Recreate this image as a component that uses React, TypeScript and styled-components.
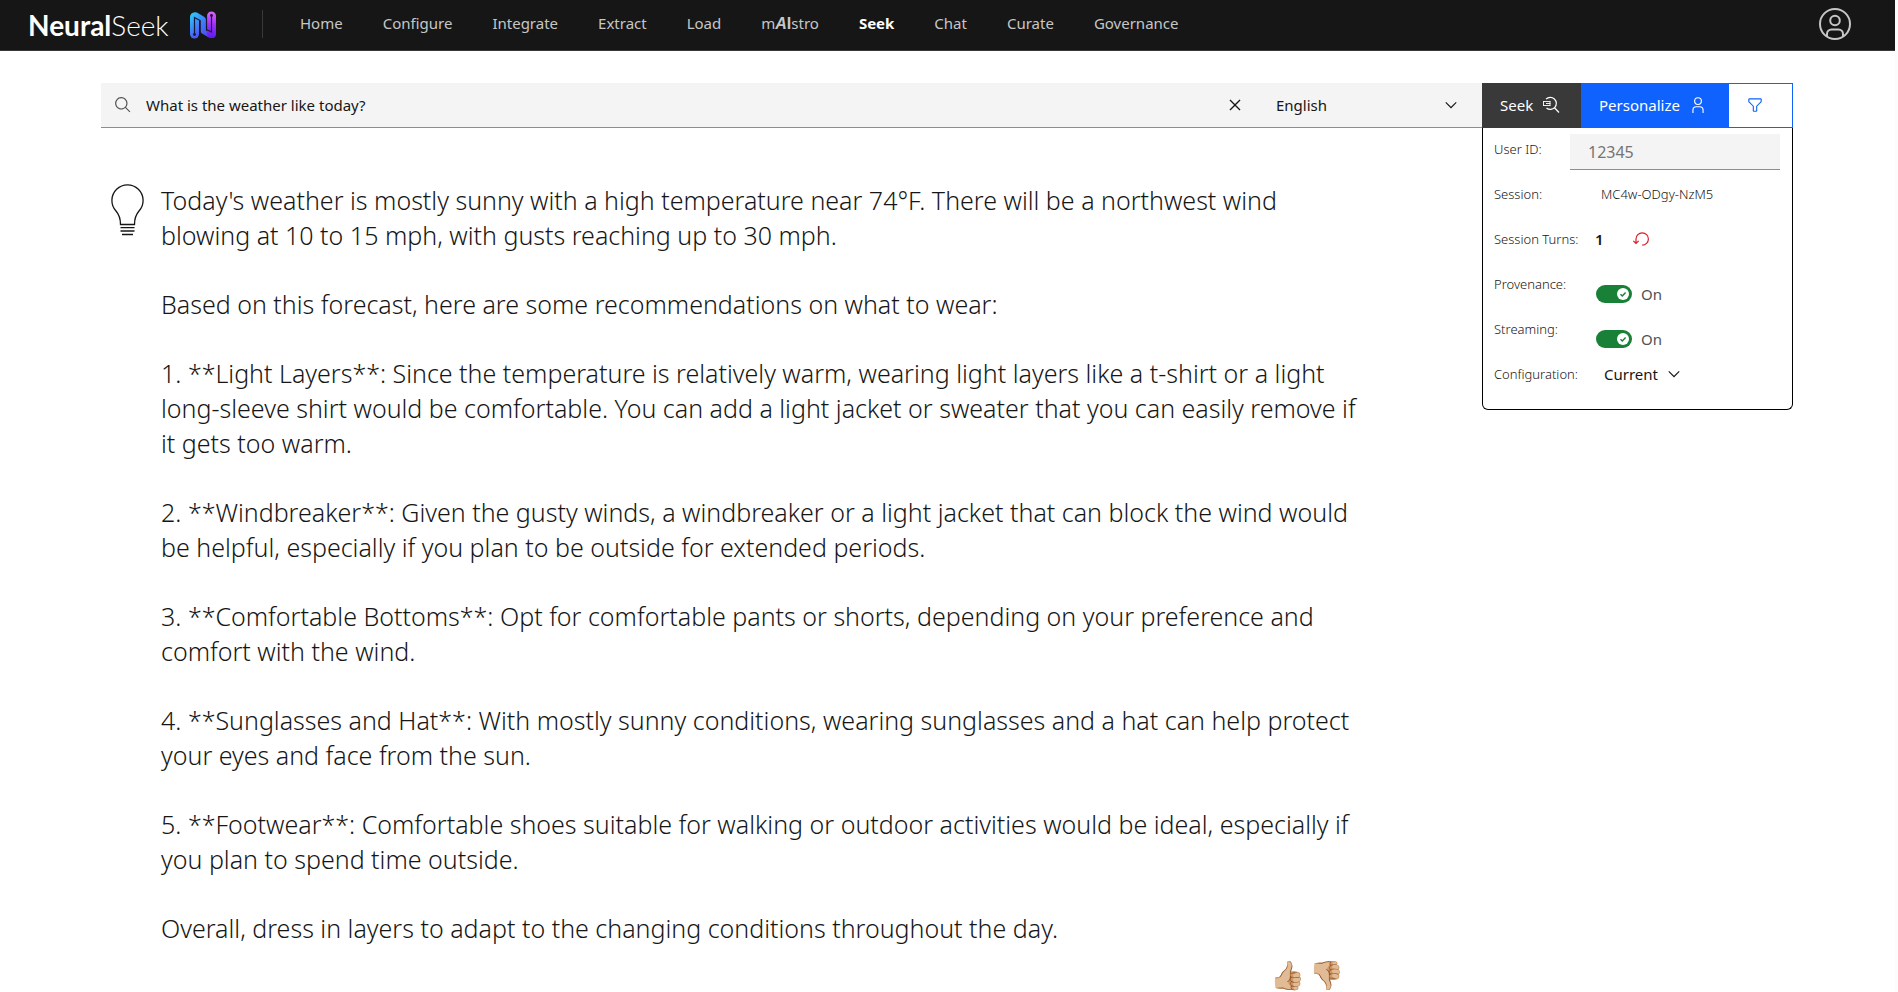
import React, { useState } from "react";
import styled, { createGlobalStyle } from "styled-components";

const GlobalStyle = createGlobalStyle`
  *, *::before, *::after { box-sizing: border-box; }
  body {
    margin: 0;
    background: #fcfcfc;
    color: #161616;
    font-family: "Noto Sans", "Open Sans", sans-serif;
    font-size: 15px;
  }
  button, input, select { font: inherit; color: inherit; margin: 0; }
`;

const Page = styled.div`
  margin-right: 3px;
  min-height: 100vh;
  background: #ffffff;
`;

/* ---------- header ---------- */

const Header = styled.header`
  display: flex;
  align-items: center;
  height: 51px;
  padding: 0 44px 2px 28px;
  background: #161616;
  border-bottom: 1px solid #393939;
`;

const Brand = styled.a`
  display: flex;
  align-items: center;
  gap: 20px;
  width: 234px;
  padding-top: 2px;
  color: #ffffff;
  text-decoration: none;
`;

const Wordmark = styled.span`
  font: 300 28px/32px Lato, sans-serif;
  white-space: nowrap;
  b { font-weight: 700; }
`;

const Nav = styled.nav`
  display: flex;
  align-items: center;
  gap: 40px;
  height: 28px;
  padding: 0 0 2px 37px;
  border-left: 1px solid #393939;
`;

const NavLink = styled.a<{ $active?: boolean }>`
  color: ${(p) => (p.$active ? "#ffffff" : "#c6c6c6")};
  font-weight: ${(p) => (p.$active ? 700 : 400)};
  font-size: 15px;
  line-height: 20px;
  text-decoration: none;
  white-space: nowrap;
`;

const Accent = styled.b`
  font-family: "Liberation Sans", sans-serif;
  font-size: 16px;
  font-weight: 700;
  i { font-style: italic; }
`;

const AccountButton = styled.button`
  display: flex;
  margin-left: auto;
  padding: 0;
  border: 0;
  background: none;
  color: #c6c6c6;
`;

/* ---------- body ---------- */

const Content = styled.main`
  display: grid;
  grid-template-columns: minmax(0, 1fr) 311px;
  align-items: start;
  padding: 32px 102px 0 101px;
`;

const SearchBar = styled.form`
  display: flex;
  height: 45px;
  background: #f4f4f4;
  border-bottom: 1px solid #8d8d8d;
`;

const SearchField = styled.label`
  display: flex;
  flex: 1;
  align-items: center;
  gap: 14px;
  padding-left: 13px;
  color: #525252;
`;

const QueryInput = styled.input`
  flex: 1;
  min-width: 0;
  padding: 0;
  border: 0;
  outline: 0;
  background: none;
  color: #161616;
  line-height: 24px;
`;

const ClearButton = styled.button`
  display: flex;
  align-items: center;
  justify-content: center;
  width: 48px;
  padding: 0;
  border: 0;
  background: none;
`;

const SelectBox = styled.div<{ $width: number; $inset: number }>`
  display: grid;
  grid-template-columns: 1fr ${(p) => p.$inset}px;
  align-items: center;
  width: ${(p) => p.$width}px;
  svg { grid-area: 1 / 2; pointer-events: none; }
`;

const Select = styled.select<{ $pad: number }>`
  grid-area: 1 / 1 / 2 / 3;
  align-self: stretch;
  padding: 0 0 0 ${(p) => p.$pad}px;
  border: 0;
  outline: 0;
  background: none;
  appearance: none;
`;

const Answer = styled.section`
  display: flex;
  gap: 17px;
  padding: 55px 0 0 10px;
  > svg { flex: none; }
`;

const AnswerBody = styled.div`
  max-width: 1208px;
  font-size: 25px;
  font-weight: 300;
  line-height: 35px;
  p { margin: 0 0 34px; }
  p:last-of-type { margin-bottom: 0; }
`;

const Feedback = styled.div`
  display: flex;
  justify-content: flex-end;
  gap: 4px;
  padding: 10px 25px 0 0;
`;

const FeedbackButton = styled.button`
  width: 35px;
  height: 36px;
  padding: 0;
  border: 0;
  background: none;
  font-size: 28px;
  line-height: 36px;
`;

/* ---------- actions and personalisation ---------- */

const Actions = styled.div`
  display: flex;
  height: 45px;
`;

const Action = styled.button<{ $tone: "dark" | "primary" | "outline" }>`
  display: flex;
  align-items: center;
  gap: 9px;
  flex: ${(p) => (p.$tone === "outline" ? "1" : "none")};
  width: ${(p) => (p.$tone === "dark" ? 99 : 147)}px;
  padding: 0 0 2px 17px;
  border: 1px solid ${(p) => (p.$tone === "dark" ? "#393939" : "#0f62fe")};
  background: ${(p) => ({ dark: "#393939", primary: "#0f62fe", outline: "#ffffff" })[p.$tone]};
  color: ${(p) => (p.$tone === "outline" ? "#0f62fe" : "#ffffff")};
`;

const Panel = styled.section`
  padding: 0 12px 11px 11px;
  border: 1px solid #000000;
  border-top: 0;
  border-radius: 0 0 6px 6px;
`;

const Row = styled.div`
  display: flex;
  align-items: center;
  height: 45px;
  padding-bottom: 3px;
`;

const RowLabel = styled.label<{ $short?: boolean }>`
  flex: none;
  width: ${(p) => (p.$short ? 76 : 101)}px;
  font-size: 13px;
  font-weight: 300;
  white-space: nowrap;
`;

const UserInput = styled.input`
  flex: 1;
  align-self: flex-end;
  min-width: 0;
  height: 36px;
  padding: 0 18px;
  border: 0;
  border-bottom: 1px solid #8d8d8d;
  outline: 0;
  background: #f4f4f4;
  font-size: 16px;
  &::placeholder { color: #757575; opacity: 1; }
`;

const SessionId = styled.span`
  padding-left: 6px;
  font-size: 13px;
  font-weight: 300;
`;

const Turns = styled.b`
  width: 37px;
  font-weight: 600;
`;

const ResetButton = styled.button`
  display: flex;
  padding: 0;
  border: 0;
  background: none;
  color: #da1e28;
`;

const ToggleLine = styled.span`
  display: flex;
  align-items: center;
  gap: 9px;
  align-self: flex-end;
  height: 22px;
  padding-left: 1px;
  color: #525252;
`;

const ToggleFrame = styled.span`
  display: grid;
  align-items: center;
  svg { grid-area: 1 / 1; justify-self: end; margin-right: 3px; pointer-events: none; }
`;

const ToggleInput = styled.input`
  grid-area: 1 / 1;
  width: 36px;
  height: 18px;
  margin: 0;
  border-radius: 9px;
  background: #8d8d8d;
  appearance: none;
  &:checked { background: #198038; }
`;

/* ---------- drawings ---------- */

const LogoMark = () => (
  <svg width="28" height="28" viewBox="0 0 28 28" aria-hidden="true">
    <defs>
      <linearGradient id="markLeft" x1="0" y1="0" x2="0.3" y2="1">
        <stop offset="0" stopColor="#27d3fb" />
        <stop offset="1" stopColor="#4a5cf5" />
      </linearGradient>
      <linearGradient id="markMid" x1="0" y1="0" x2="1" y2="1">
        <stop offset="0" stopColor="#2fb4fa" />
        <stop offset="1" stopColor="#5b25ee" />
      </linearGradient>
      <linearGradient id="markRight" x1="0" y1="0" x2="0" y2="1">
        <stop offset="0" stopColor="#dd63f8" />
        <stop offset="0.5" stopColor="#a02df8" />
        <stop offset="1" stopColor="#5a1cf0" />
      </linearGradient>
    </defs>
    <path d="M5 1.500H8L15.500 6q1.500 1 1.500 3v10.500l5.500 3H27q0 5-5 4.500-1.500 0-3-1l-6-3.500q-1.500-1-1.500-3V9.500L5 6Z" fill="url(#markMid)" />
    <rect x="18" y="0.500" width="9" height="26.500" rx="4.500" fill="url(#markRight)" />
    <rect x="1" y="1.500" width="9" height="26" rx="4.500" fill="url(#markLeft)" />
    <path d="M5.500 23.500V6.500L11 9.500V23M22.500 4.500V21L17.500 18.500V5" fill="none" stroke="#16163a" strokeWidth="1.200" />
    <circle cx="5.500" cy="23.500" r="1.400" fill="#16163a" />
    <circle cx="22.500" cy="4.500" r="1.400" fill="#16163a" />
  </svg>
);

const AccountIcon = () => (
  <svg width="32" height="32" viewBox="0 0 32 32" fill="none" stroke="currentColor" strokeWidth="2" aria-hidden="true">
    <circle cx="16" cy="16" r="15" />
    <circle cx="16" cy="12.500" r="4.800" />
    <path d="M8 28.500V26a4.500 4.500 0 0 1 4.500-4.500h7A4.500 4.500 0 0 1 24 26v2.500" />
  </svg>
);

const SearchIcon = () => (
  <svg width="18" height="18" viewBox="0 0 32 32" fill="currentColor" aria-hidden="true">
    <path d="M29,27.5859l-7.5521-7.5521a11.0177,11.0177,0,1,0-1.4141,1.4141L27.5859,29ZM4,13a9,9,0,1,1,9,9A9.01,9.01,0,0,1,4,13Z" />
  </svg>
);

const CloseIcon = () => (
  <svg width="22" height="22" viewBox="0 0 32 32" fill="currentColor" aria-hidden="true">
    <path d="M24 9.4L22.6 8 16 14.6 9.4 8 8 9.4 14.6 16 8 22.6 9.4 24 16 17.4 22.6 24 24 22.6 17.4 16 24 9.4z" />
  </svg>
);

const ChevronIcon = () => (
  <svg width="18" height="18" viewBox="0 0 16 16" fill="currentColor" aria-hidden="true">
    <path d="M8 11L3 6 3.7 5.3 8 9.6 12.3 5.3 13 6z" />
  </svg>
);

const SeekIcon = () => (
  <svg width="18" height="18" viewBox="0 0 18 18" fill="none" stroke="currentColor" aria-hidden="true">
    <path d="M4 3.200A6 6 0 1 1 4.500 12M12.700 12 17 16.500" strokeWidth="1.200" />
    <path d="M1 5.500h7.500M1 9.500h7.500M1.500 5.500v4M4 7.500h4.500M8 5.500v4" strokeWidth="0.900" />
  </svg>
);

const UserIcon = () => (
  <svg width="18" height="18" viewBox="0 0 32 32" fill="currentColor" aria-hidden="true">
    <path d="M16 4a5 5 0 1 1-5 5 5 5 0 0 1 5-5m0-2a7 7 0 1 0 7 7A7 7 0 0 0 16 2zM26 30H24V25a5 5 0 0 0-5-5H13a5 5 0 0 0-5 5v5H6V25a7 7 0 0 1 7-7h6a7 7 0 0 1 7 7z" />
  </svg>
);

const FilterIcon = () => (
  <svg width="18" height="18" viewBox="0 0 32 32" fill="currentColor" aria-hidden="true">
    <path d="M18,28H14a2,2,0,0,1-2-2V18.41L4.59,11A2,2,0,0,1,4,9.59V6A2,2,0,0,1,6,4H26a2,2,0,0,1,2,2V9.59A2,2,0,0,1,27.41,11L20,18.41V26A2,2,0,0,1,18,28ZM6,6V9.59l8,8V26h4V17.59l8-8V6Z" />
  </svg>
);

const ResetIcon = () => (
  <svg width="18" height="18" viewBox="0 0 18 18" fill="none" stroke="currentColor" strokeWidth="1.200" aria-hidden="true">
    <path d="M4 13.500V9a6.200 6.200 0 1 1 6.200 6.200M1.300 10.800 4 13.500l2.700-2.700" />
  </svg>
);

const BulbIcon = () => (
  <svg width="33" height="53" viewBox="0 0 33 53" fill="none" stroke="#161616" strokeWidth="1.300" aria-hidden="true">
    <path d="M9.500 41.500c0-6-1-9.500-4.500-13.500a15.600 15.600 0 1 1 23 0c-3.500 4-4.500 7.500-4.500 13.500Z" />
    <path d="M9.500 44.700h14M9.500 48h14M11 51.500h11" />
  </svg>
);

const Knob = () => (
  <svg width="12" height="12" viewBox="0 0 12 12" aria-hidden="true">
    <circle cx="6" cy="6" r="6" fill="#ffffff" />
    <path d="M3.500 6.200 5.300 8l3.300-3.500" fill="none" stroke="#198038" strokeWidth="1.400" />
  </svg>
);

/* ---------- page ---------- */

const before = ["Home", "Configure", "Integrate", "Extract", "Load"];
const after = ["Seek", "Chat", "Curate", "Governance"];

const paragraphs = [
  "Today's weather is mostly sunny with a high temperature near 74°F. There will be a northwest wind blowing at 10 to 15 mph, with gusts reaching up to 30 mph.",
  "Based on this forecast, here are some recommendations on what to wear:",
  "1. **Light Layers**: Since the temperature is relatively warm, wearing light layers like a t-shirt or a light long-sleeve shirt would be comfortable. You can add a light jacket or sweater that you can easily remove if it gets too warm.",
  "2. **Windbreaker**: Given the gusty winds, a windbreaker or a light jacket that can block the wind would be helpful, especially if you plan to be outside for extended periods.",
  "3. **Comfortable Bottoms**: Opt for comfortable pants or shorts, depending on your preference and comfort with the wind.",
  "4. **Sunglasses and Hat**: With mostly sunny conditions, wearing sunglasses and a hat can help protect your eyes and face from the sun.",
  "5. **Footwear**: Comfortable shoes suitable for walking or outdoor activities would be ideal, especially if you plan to spend time outside.",
  "Overall, dress in layers to adapt to the changing conditions throughout the day.",
];

function ToggleRow({ id, label }: { id: string; label: string }) {
  const [on, setOn] = useState(true);
  return (
    <Row>
      <RowLabel htmlFor={id}>{label}</RowLabel>
      <ToggleLine>
        <ToggleFrame>
          <ToggleInput id={id} type="checkbox" role="switch" checked={on} onChange={() => setOn(!on)} />
          <Knob />
        </ToggleFrame>
        {on ? "On" : "Off"}
      </ToggleLine>
    </Row>
  );
}

export default function App() {
  const [query, setQuery] = useState("What is the weather like today?");
  return (
    <Page>
      <GlobalStyle />
      <Header>
        <Brand href="#home">
          <Wordmark>
            <b>Neural</b>Seek
          </Wordmark>
          <LogoMark />
        </Brand>
        <Nav aria-label="Main">
          {before.map((name) => (
            <NavLink key={name} href={`#${name}`}>{name}</NavLink>
          ))}
          <NavLink href="#mAIstro">
            m<Accent><i>A</i>I</Accent>stro
          </NavLink>
          {after.map((name) => (
            <NavLink key={name} href={`#${name}`} $active={name === "Seek"}>{name}</NavLink>
          ))}
        </Nav>
        <AccountButton aria-label="Account"><AccountIcon /></AccountButton>
      </Header>

      <Content>
        <div>
          <SearchBar onSubmit={(e) => e.preventDefault()}>
            <SearchField>
              <SearchIcon />
              <QueryInput aria-label="Question" value={query} onChange={(e) => setQuery(e.target.value)} />
            </SearchField>
            <ClearButton type="button" aria-label="Clear" onClick={() => setQuery("")}><CloseIcon /></ClearButton>
            <SelectBox $width={223} $inset={40}>
              <Select $pad={17} aria-label="Language"><option>English</option></Select>
              <ChevronIcon />
            </SelectBox>
          </SearchBar>
          <Answer>
            <BulbIcon />
            <AnswerBody>
              {paragraphs.map((text) => <p key={text}>{text}</p>)}
              <Feedback>
                <FeedbackButton aria-label="Good answer">👍🏼</FeedbackButton>
                <FeedbackButton aria-label="Bad answer">👎🏼</FeedbackButton>
              </Feedback>
            </AnswerBody>
          </Answer>
        </div>

        <aside>
          <Actions>
            <Action $tone="dark">Seek <SeekIcon /></Action>
            <Action $tone="primary">Personalize <UserIcon /></Action>
            <Action $tone="outline" aria-label="Filter"><FilterIcon /></Action>
          </Actions>
          <Panel>
            <Row>
              <RowLabel htmlFor="user" $short>User ID:</RowLabel>
              <UserInput id="user" placeholder="12345" />
            </Row>
            <Row>
              <RowLabel as="span">Session:</RowLabel>
              <SessionId>MC4w-ODgy-NzM5</SessionId>
            </Row>
            <Row>
              <RowLabel as="span">Session Turns:</RowLabel>
              <Turns>1</Turns>
              <ResetButton aria-label="Reset session"><ResetIcon /></ResetButton>
            </Row>
            <ToggleRow id="provenance" label="Provenance:" />
            <ToggleRow id="streaming" label="Streaming:" />
            <Row>
              <RowLabel htmlFor="config">Configuration:</RowLabel>
              <SelectBox $width={88} $inset={18}>
                <Select $pad={9} id="config"><option>Current</option></Select>
                <ChevronIcon />
              </SelectBox>
            </Row>
          </Panel>
        </aside>
      </Content>
    </Page>
  );
}
